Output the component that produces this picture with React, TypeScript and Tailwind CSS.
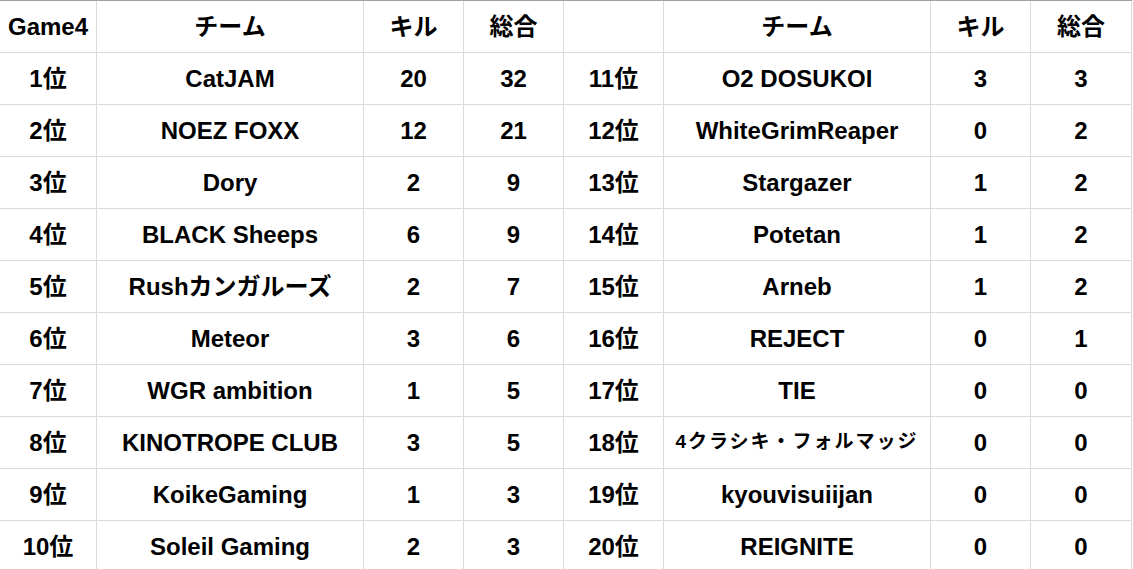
import React from "react";

const left = [
  ["1位", "CatJAM", "20", "32"],
  ["2位", "NOEZ FOXX", "12", "21"],
  ["3位", "Dory", "2", "9"],
  ["4位", "BLACK Sheeps", "6", "9"],
  ["5位", "Rushカンガルーズ", "2", "7"],
  ["6位", "Meteor", "3", "6"],
  ["7位", "WGR ambition", "1", "5"],
  ["8位", "KINOTROPE CLUB", "3", "5"],
  ["9位", "KoikeGaming", "1", "3"],
  ["10位", "Soleil Gaming", "2", "3"],
];

const right = [
  ["11位", "O2 DOSUKOI", "3", "3"],
  ["12位", "WhiteGrimReaper", "0", "2"],
  ["13位", "Stargazer", "1", "2"],
  ["14位", "Potetan", "1", "2"],
  ["15位", "Arneb", "1", "2"],
  ["16位", "REJECT", "0", "1"],
  ["17位", "TIE", "0", "0"],
  ["18位", "4クラシキ・フォルマッジ", "0", "0"],
  ["19位", "kyouvisuiijan", "0", "0"],
  ["20位", "REIGNITE", "0", "0"],
];

const Cell = ({ children, small }: { children: React.ReactNode; small?: boolean }) => (
  <div
    className={`h-[52px] flex items-center justify-center border-r border-b border-[#dadada] whitespace-nowrap overflow-visible ${
      small ? "text-[19px] tracking-[2px]" : "text-[24px]"
    }`}
  >
    {children}
  </div>
);

const App = () => {
  const rows = left.map((l, i) => [...l, ...right[i]]);
  return (
    <div
      className="w-[1133px] h-[569px] overflow-hidden bg-white text-black font-bold"
      style={{ fontFamily: '"Liberation Sans", "Noto Sans CJK JP", sans-serif' }}
    >
      <div className="grid grid-cols-[97px_267px_100px_100px_100px_267px_100px_101px] w-[1132px] border-t border-[#a0a0a0]">
        <Cell>Game4</Cell>
        <Cell>チーム</Cell>
        <Cell>キル</Cell>
        <Cell>総合</Cell>
        <Cell>{""}</Cell>
        <Cell>チーム</Cell>
        <Cell>キル</Cell>
        <Cell>総合</Cell>
        {rows.map((r, i) =>
          r.map((v, j) => (
            <Cell key={`${i}-${j}`} small={v === "4クラシキ・フォルマッジ"}>
              {v}
            </Cell>
          ))
        )}
      </div>
    </div>
  );
};

export default App;
